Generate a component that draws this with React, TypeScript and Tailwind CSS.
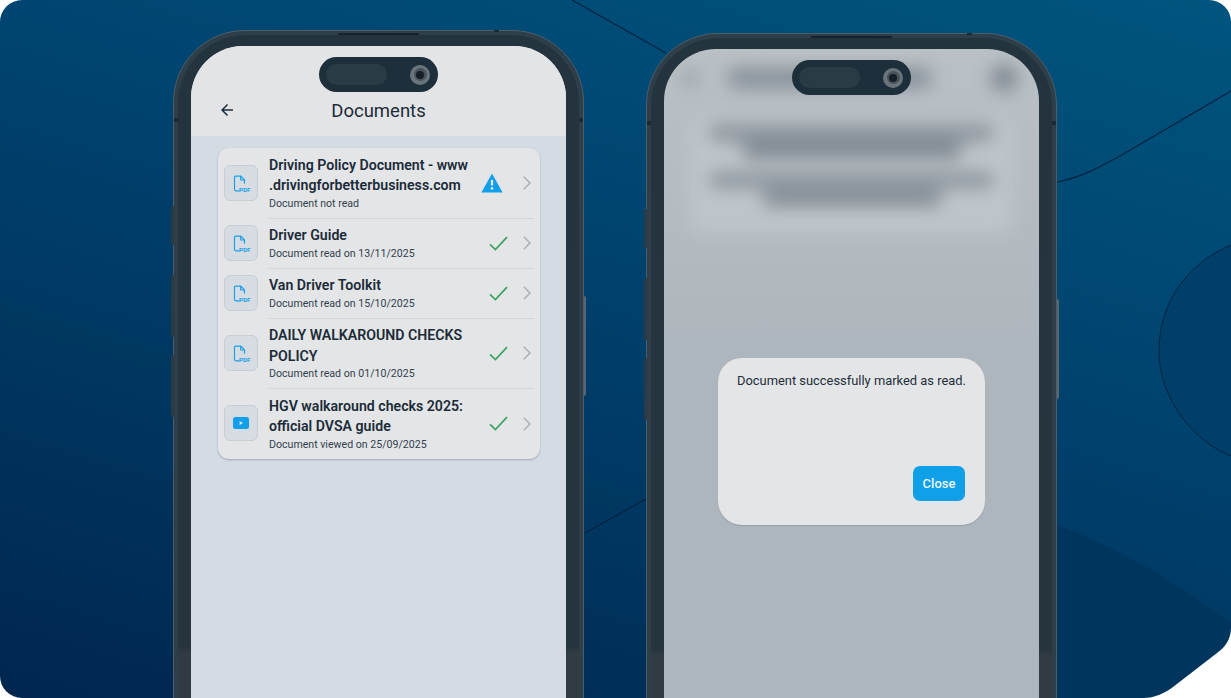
import type { ReactNode } from 'react'

type Doc = {
  title: string
  sub: string
  kind: 'pdf' | 'video'
  status: 'warning' | 'done'
}

const docs: Doc[] = [
  { title: 'Driving Policy Document - www .drivingforbetterbusiness.com', sub: 'Document not read', kind: 'pdf', status: 'warning' },
  { title: 'Driver Guide', sub: 'Document read on 13/11/2025', kind: 'pdf', status: 'done' },
  { title: 'Van Driver Toolkit', sub: 'Document read on 15/10/2025', kind: 'pdf', status: 'done' },
  { title: 'DAILY WALKAROUND CHECKS POLICY', sub: 'Document read on 01/10/2025', kind: 'pdf', status: 'done' },
  { title: 'HGV walkaround checks 2025: official DVSA guide', sub: 'Document viewed on 25/09/2025', kind: 'video', status: 'done' },
]

function PdfIcon() {
  return (
    <svg width="18" height="20" viewBox="-1.5 -2 18 20" fill="none" className="overflow-visible">
      <path
        d="M2 1.2h5.4L11 4.8v3.4M7.2 1.4v3.6H11M2 1.2C1.4 1.2 1 1.6 1 2.2v12.4c0 .8.5 1.2 1.2 1.2h3.4"
        stroke="#1a9fe8"
        strokeWidth="1.2"
        strokeLinecap="round"
        strokeLinejoin="round"
      />
      <text x="5.6" y="16.8" fontFamily="Roboto, sans-serif" fontSize="6.2" fontWeight="700" fill="#1a9fe8">
        PDF
      </text>
    </svg>
  )
}

function VideoIcon() {
  return (
    <svg width="16" height="12" viewBox="0 0 16 12">
      <rect width="16" height="12" rx="2.5" fill="#119fe9" />
      <path d="M6.6 3.9 10 6 6.6 8.1z" fill="#e3e7ea" />
    </svg>
  )
}

function WarningIcon() {
  return (
    <svg width="22" height="20" viewBox="0 0 22 20" className="mr-[5px]">
      <path d="M11 .6 21.6 19.4H.4z" fill="#119fe9" />
      <rect x="9.9" y="6.8" width="2.2" height="6" rx="1" fill="#e3e5e7" />
      <circle cx="11" cy="15.4" r="1.3" fill="#e3e5e7" />
    </svg>
  )
}

function CheckIcon() {
  return (
    <svg width="19" height="15" viewBox="0 0 19 15" fill="none">
      <path d="M1 8.4 6.4 13.6 18 1.2" stroke="#3aa35f" strokeWidth="1.7" />
    </svg>
  )
}

function Chevron() {
  return (
    <svg width="16" height="16" viewBox="0 0 16 16" fill="none" className="ml-[11px] shrink-0">
      <path d="M4.8 1.8 11 8l-6.2 6.2" stroke="#a9b1b8" strokeWidth="1.5" />
    </svg>
  )
}

function DocRow({ doc, last }: { doc: Doc; last: boolean }) {
  return (
    <div className="flex">
      <div className="-mt-px ml-[6px] mr-[11px] flex h-[36px] w-[34px] shrink-0 items-center justify-center self-center rounded-[6px] border border-[#c6cfd6] bg-[#d6dce1]">
        {doc.kind === 'pdf' ? <PdfIcon /> : <VideoIcon />}
      </div>
      <div className={`flex min-w-0 flex-1 items-center ${last ? '' : 'border-b border-[#cfd6dd]'}`}>
        <div className="w-[205px] shrink-0 pb-[7px] pt-[6.5px]">
          <div className="text-[14.15px] font-semibold leading-[20.5px] text-[#1c2b38]">{doc.title}</div>
          <div className="mt-px text-[10.6px] leading-[14px] text-[#33414d]">{doc.sub}</div>
        </div>
        <div className="flex w-[34px] shrink-0 justify-end">
          {doc.status === 'warning' ? <WarningIcon /> : <CheckIcon />}
        </div>
        <Chevron />
      </div>
    </div>
  )
}

function Island() {
  return (
    <div className="flex h-[35px] w-[119px] items-center justify-between rounded-full bg-[#1e2f3c] pl-[7px] pr-[8px]">
      <div className="h-[21px] w-[61px] rounded-full bg-[#2a3b46]" />
      <div className="flex h-[20px] w-[20px] items-center justify-center rounded-full bg-[#6a747b]">
        <div className="flex h-[13px] w-[13px] items-center justify-center rounded-full bg-[#47525a]">
          <div className="h-[8px] w-[8px] rounded-full bg-[#161f26]" />
        </div>
      </div>
    </div>
  )
}

function Phone({ children, className = '' }: { children: ReactNode; className?: string }) {
  return (
    <div className={`relative h-[700px] w-[411px] shrink-0 ${className}`}>
      {/* side buttons */}
      <div className="absolute -left-[2px] top-[176px] h-[39px] w-[3px] rounded-l-[2px] bg-[#2b3b46]" />
      <div className="absolute -left-[2px] top-[245px] h-[62px] w-[3px] rounded-l-[2px] bg-[#2b3b46]" />
      <div className="absolute -left-[2px] top-[325px] h-[62px] w-[3px] rounded-l-[2px] bg-[#2b3b46]" />
      <div className="absolute -right-[2px] top-[266px] h-[100px] w-[2px] rounded-r-[2px] bg-[#59666f]" />
      <div className="h-full rounded-t-[72px] border border-[#4d5e69] bg-[#2f3f49] px-[4px] pt-[4px]">
        <div className="h-full rounded-t-[68px] bg-[linear-gradient(180deg,#24343f_0%,#26343d_88%,#303b43_89%,#303b43_100%)] px-[13px] pt-[11px]">
          {children}
        </div>
      </div>
      {/* speaker slit and antenna marks */}
      <div className="absolute left-[165px] top-[3px] h-[2px] w-[81px] rounded-full bg-[#14222d]" />
      <div className="absolute left-[321px] top-0 h-[2px] w-[5px] bg-[#1b2a35]" />
      <div className="absolute left-[1px] top-[88px] h-[4px] w-[4px] bg-[#1b2a35]" />
      <div className="absolute right-[1px] top-[88px] h-[4px] w-[4px] bg-[#1b2a35]" />
      <div className="absolute left-[146px] top-[27px]">
        <Island />
      </div>
    </div>
  )
}

function DocumentsScreen() {
  return (
    <div className="flex h-full flex-col overflow-hidden rounded-t-[52px] bg-[#d5dbe3]">
      <div className="grid h-[90px] shrink-0 grid-cols-[1fr_auto_1fr] items-center bg-[#e3e4e6] pt-[38px] text-[#1c2b38]">
        <svg width="18" height="18" viewBox="0 0 24 24" fill="currentColor" className="ml-[27px]">
          <path d="M20 11H7.83l5.59-5.59L12 4l-8 8 8 8 1.41-1.41L7.83 13H20v-2z" />
        </svg>
        <div className="pt-px text-[18.5px] leading-[26px]">Documents</div>
        <div />
      </div>
      <div className="pl-[27px] pr-[26px] pt-[12px]">
        <div className="overflow-hidden rounded-[11px] bg-[#e3e5e7] pr-[6px] shadow-[0_1px_2px_rgba(90,105,120,0.45)]">
          {docs.map((doc, i) => (
            <DocRow key={doc.title} doc={doc} last={i === docs.length - 1} />
          ))}
        </div>
      </div>
    </div>
  )
}

function MarkedReadScreen() {
  return (
    <div className="relative flex h-full flex-col overflow-hidden rounded-t-[52px] bg-[linear-gradient(180deg,#bac1c6_0%,#aeb6bd_45%,#aeb6bd_100%)]">
      {/* page behind the dialog, out of focus */}
      <div className="blur-[9px]">
        <div className="flex items-center pl-[17px] pr-[22px] pt-[16px]">
          <div className="h-[18px] w-[18px] rounded-full bg-[#98a1a8]" />
          <div className="ml-[28px] h-[20px] w-[205px] rounded-full bg-[#868f97]" />
          <div className="ml-auto h-[26px] w-[26px] rounded-full bg-[#7c858d]" />
        </div>
        <div className="mx-[26px] mt-[27px] flex h-[115px] flex-col items-center rounded-[10px] bg-[#bec5ca] pt-[8px]">
          <div className="h-[14px] w-[285px] rounded-full bg-[#838c94]" />
          <div className="mt-[2px] h-[16px] w-[220px] rounded-full bg-[#7b848c]" />
          <div className="mt-[15px] h-[14px] w-[285px] rounded-full bg-[#868f97]" />
          <div className="mt-[3px] h-[16px] w-[180px] rounded-full bg-[#7f8890]" />
        </div>
      </div>
      <div className="absolute left-[54px] top-[309px] flex h-[167px] w-[267px] flex-col rounded-[24px] bg-[#e3e5e7] pb-[24px] pl-[19px] pr-[20px] pt-[14px] shadow-[0_1px_1px_rgba(90,105,120,0.3)]">
        <div className="whitespace-nowrap text-[12.9px] leading-[18px] text-[#1f2d3a]">Document successfully marked as read.</div>
        <button className="ml-auto mt-auto h-[35px] w-[52px] rounded-[7px] bg-[#0fa0e8] text-[13px] font-medium text-[#eef6fb]">
          Close
        </button>
      </div>
    </div>
  )
}

export default function App() {
  return (
    <div className="relative h-[698px] w-[1231px] overflow-hidden bg-white font-['Roboto',sans-serif]">
      <div className="absolute inset-0 rounded-[22px] bg-[linear-gradient(197deg,#00557f_0%,#004470_38%,#00264f_100%)]" />
      {/* background shapes */}
      <svg className="absolute inset-0" width="1231" height="698" viewBox="0 0 1231 698" fill="none">
        <path d="M1231 245C1190 262 1159 300 1159 351C1159 400 1195 442 1231 456Z" fill="#003f69" />
        <path d="M1231 245C1190 262 1159 300 1159 351C1159 400 1195 442 1231 456" stroke="#00223f" strokeWidth="1" />
        <path d="M1057 525Q1140 555 1231 623V698H1057Z" fill="#00365e" />
        <path d="M585 698 646 660V698Z" fill="#002f59" />
        <path d="M572 0 666 53" stroke="#00223f" strokeWidth="1.2" />
        <path d="M585 533 646 499" stroke="#00223f" strokeWidth="1.2" />
        <path d="M1057 182C1080 178 1100 167 1120 156L1231 91" stroke="#00223f" strokeWidth="1.2" />
        <path d="M1231 628C1231 638 1226 647 1217 653L1173 687C1165 693 1155 698 1143 698H1231Z" fill="#fff" />
      </svg>
      <div className="relative flex items-start gap-[62px] pl-[173px] pt-[30px]">
        <Phone>
          <DocumentsScreen />
        </Phone>
        <Phone className="mt-[3px]">
          <MarkedReadScreen />
        </Phone>
      </div>
    </div>
  )
}
